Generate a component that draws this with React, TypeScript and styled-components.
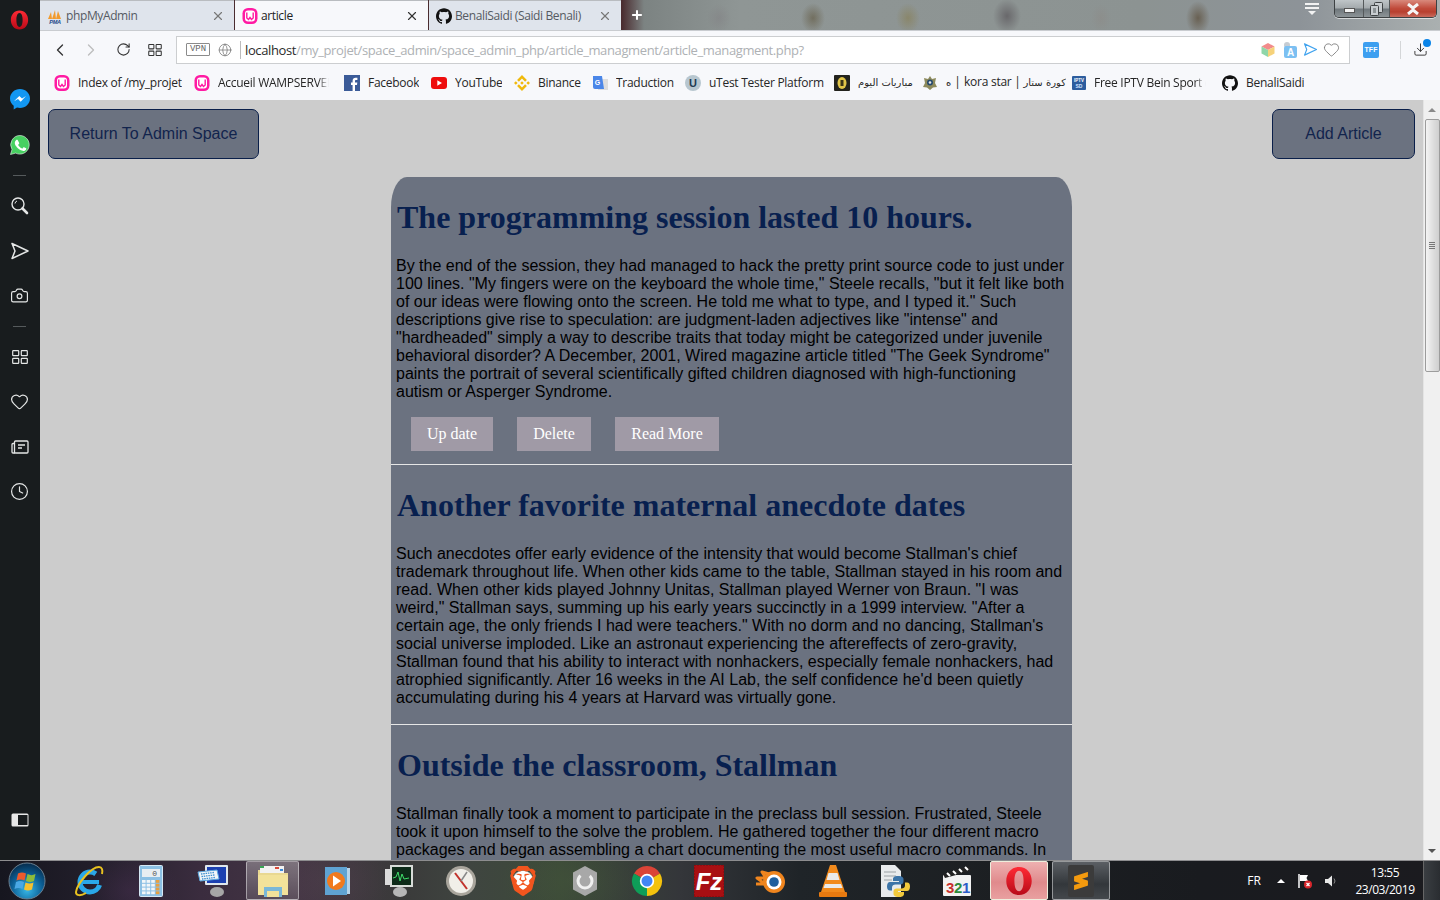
import React from "react";
import styled, { createGlobalStyle } from "styled-components";
import { Camera, Heart, Clock, ChevronLeft, ChevronRight, RotateCw, Globe, X, Plus, Download } from "lucide-react";
import { SiBinance, SiGithub, SiSublimetext, SiBrave } from "react-icons/si";

const Global = createGlobalStyle`
  html, body { margin: 0; padding: 0; width: 1440px; height: 900px; overflow: hidden; background: #000; }
  * { box-sizing: border-box; }
`;

const Screen = styled.div`
  width: 1440px; height: 900px; display: grid;
  grid-template-columns: 40px 1fr; grid-template-rows: 860px 40px;
  font-family: "Open Sans", "Noto Sans", "DejaVu Sans", sans-serif;
`;

/* ---------- Opera side bar ---------- */
const Sidebar = styled.aside`
  background: #181c1e; display: flex; flex-direction: column; align-items: center; color: #e4e6e6; padding-right: 1px;
`;
const SideSlot = styled.div<{ $h?: number }>`
  height: ${(p) => p.$h ?? 45}px; width: 100%; flex: none;
  display: flex; align-items: center; justify-content: center;
`;
const SideSep = styled.div`
  width: 13px; height: 1px; background: #555a5c; margin: 8px 0 7px;
`;
const SideBottom = styled.div`
  margin-top: auto; padding-bottom: 18px; width: 100%;
`;

/* ---------- Browser ---------- */
const Browser = styled.main`
  display: flex; flex-direction: column; min-width: 0; height: 860px; overflow: hidden;
`;
const TabStrip = styled.div`
  height: 31px; flex: none; display: flex; align-items: stretch; position: relative;
  background:
    radial-gradient(ellipse 12px 14px at 679px 18px, rgba(125,120,125,.35), transparent),
    radial-gradient(ellipse 12px 15px at 773px 18px, rgba(95,85,60,.6), transparent),
    radial-gradient(ellipse 12px 15px at 868px 18px, rgba(135,125,80,.6), transparent),
    radial-gradient(ellipse 14px 17px at 967px 16px, rgba(85,80,85,.65), transparent),
    radial-gradient(ellipse 10px 14px at 1061px 18px, rgba(140,130,125,.3), transparent),
    radial-gradient(ellipse 12px 17px at 1158px 18px, rgba(90,75,55,.7), transparent),
    linear-gradient(90deg, #4a2c30 582px, #7c8382 604px, #8f9695 700px, #8c9392 1100px, #8d9398 1260px, #aab0b0 100%);
  border-bottom: 1px solid #c9ccd0;
`;
const Tab = styled.div<{ $active?: boolean; $w: number }>`
  width: ${(p) => p.$w}px; flex: none; display: flex; align-items: center; gap: 3px;
  padding: 0 9px 0 7px; margin-right: 1px; font-size: 12px; letter-spacing: -.38px;
  background: ${(p) => (p.$active ? "#f7f8fb" : "#dfe4ec")};
  color: ${(p) => (p.$active ? "#222" : "#555a62")};
  border-top: 1px solid #b9bcc0;
`;
const TabTitle = styled.span`
  flex: 1; white-space: nowrap; overflow: hidden;
`;
const NewTab = styled.div`
  width: 29px; display: flex; align-items: center; justify-content: center; color: #fff;
`;
const StripMenu = styled.div`
  margin-left: auto; width: 30px; display: flex; flex-direction: column; gap: 2px; align-items: center; padding-top: 3px; margin-right: 7px;
`;
const StripBar = styled.i`
  width: 14px; height: 2px; background: #f2f2f2; display: block;
`;
const WinControls = styled.div`
  width: 103px; height: 18px; display: flex; border: 1px solid #3d4143; border-top: none; border-radius: 0 0 5px 5px; overflow: hidden; margin-right: 3px;
  box-shadow: 0 1px 0 rgba(255,255,255,.6);
`;
const WinBtn = styled.div<{ $w: number; $red?: boolean }>`
  width: ${(p) => p.$w}px; flex: none; display: flex; align-items: center; justify-content: center; color: #fff;
  background: ${(p) => (p.$red ? "linear-gradient(#d9897c, #c04a3a 50%, #b8402f 70%, #c96a5c)" : "linear-gradient(#bfc5c8, #a5abae 45%, #70787d 55%, #8d9497)")};
  border-right: 1px solid #55595b;
  &:last-child { border-right: none; }
`;
const MinGlyph = styled.i`
  display: block; width: 11px; height: 5px; background: #f2f2f2; border: 1px solid #555; margin-top: 3px;
`;
const Toolbar = styled.div`
  height: 35px; flex: none; display: flex; align-items: center; background: #f7f8fb; padding: 2px 0 0 9px;
`;
const NavBtn = styled.div<{ $w?: number; $c?: string }>`
  width: ${(p) => p.$w ?? 32}px; flex: none; display: flex; align-items: center; justify-content: center; color: ${(p) => p.$c ?? "#333"};
`;
const Address = styled.div`
  margin-left: 1px; width: 1174px; height: 28px; flex: none; background: #fff; border: 1px solid #ccced0;
  display: flex; align-items: center; padding: 0 9px 0 9px; font-size: 13px; letter-spacing: -.38px;
`;
const VpnBadge = styled.span`
  width: 24px; height: 13px; border: 1px solid #8b8b8b; font: 9px/11px "Liberation Mono", monospace; letter-spacing: 0; color: #666; text-align: center; border-radius: 1px; flex: none;
`;
const AddrDivider = styled.i`
  width: 1px; height: 18px; background: #bcbcbc; margin: 0 4px 0 0; display: block; flex: none;
`;
const Url = styled.div`
  flex: 1; color: #aeb1b4; white-space: nowrap; overflow: hidden; padding-top: 1px;
`;
const Host = styled.span`
  color: #2a2a2a;
`;
const AddrIcons = styled.div`
  display: flex; align-items: center; gap: 5px;
`;
const TffBadge = styled.div`
  width: 16px; height: 16px; border-radius: 2px; background: #3d9ff0; color: #fff; font: 700 7px/16px "Liberation Sans", sans-serif; text-align: center;
`;
const ToolRight = styled.div`
  flex: 1; display: flex; align-items: center; padding-left: 13px; position: relative;
`;
const ToolSep = styled.i`
  width: 1px; height: 18px; background: #d4d6d8; margin-left: 21px; display: block;
`;
const BlueDot = styled.i`
  position: absolute; right: 9px; top: -2px; width: 8px; height: 8px; border-radius: 50%; background: #0a84e8; display: block;
`;
const Bookmarks = styled.div`
  height: 34px; flex: none; display: flex; align-items: center; background: #f7f8fb; padding: 0 0 1px 14px; font-size: 12px; color: #262626;
`;
const Bookmark = styled.div<{ $w: number }>`
  width: ${(p) => p.$w}px; flex: none; display: flex; align-items: center; gap: 8px; white-space: nowrap;
  & > svg { flex: none; }
`;
const MarkLabel = styled.span<{ $max: number; $fade?: boolean }>`
  display: block; max-width: ${(p) => p.$max}px; overflow: hidden; letter-spacing: -.27px; line-height: 18px;
  ${(p) => p.$fade && "-webkit-mask-image: linear-gradient(90deg, #000 90%, transparent); mask-image: linear-gradient(90deg, #000 90%, transparent);"}
`;
const ArabicRun = styled.span`
  font-family: "DejaVu Sans", sans-serif; font-size: 10px; letter-spacing: 0;
`;

/* ---------- Page ---------- */
const PageArea = styled.div`
  flex: 1; min-height: 0; display: flex; background: #cccccc;
`;
const Page = styled.div`
  flex: 1; min-width: 0; overflow: hidden; font-family: "Liberation Sans", Arial, sans-serif;
`;
const TopRow = styled.div`
  display: flex; justify-content: space-between; padding: 9px 8px 18px;
`;
const AdminButton = styled.a<{ $w: number }>`
  height: 50px; width: ${(p) => p.$w}px; display: flex; align-items: center; justify-content: center; font-size: 16px;
  color: #12244d; background: #6b7280; border: 1px solid #0a1f4a; border-radius: 7px;
`;
const ArticleList = styled.section`
  width: 681px; margin: 0 auto; background: #6b7280;
  border-radius: 16px 16px 0 0 / 30px 30px 0 0;
`;
const Article = styled.article<{ $pb: number; $rule?: boolean }>`
  padding: 0 5px ${(p) => p.$pb}px; border-bottom: ${(p) => (p.$rule ? "1px solid #e6e6e6" : "none")};
`;
const Heading = styled.h2`
  margin: 0; padding: 24px 0 23px; font: 700 32px/33px "Liberation Serif", "Times New Roman", serif;
  color: #08204f; white-space: nowrap; transform: translateX(1px);
`;
const Body = styled.p`
  margin: 0; font-size: 16px; line-height: 18px; color: #000;
`;
const ActionRow = styled.div`
  display: flex; gap: 24px; margin: 16px 0 0 15px;
`;
const ActionButton = styled.a<{ $w: number }>`
  height: 34px; width: ${(p) => p.$w}px; display: flex; align-items: center; justify-content: center; background: #a09aa6; color: #fff;
  font: 16px "Liberation Serif", "Times New Roman", serif;
`;
const Scrollbar = styled.div`
  width: 17px; flex: none; background: #f0f0f0; display: flex; flex-direction: column; align-items: center; border-left: 1px solid #e4e4e4;
`;
const ScrollCap = styled.div`
  height: 19px; flex: none; display: flex; align-items: center; justify-content: center; width: 100%;
`;
const ScrollArrow = styled.i<{ $down?: boolean; $c?: string }>`
  display: block; width: 0; height: 0; border-left: 4px solid transparent; border-right: 4px solid transparent;
  ${(p) => (p.$down ? `border-top: 4px solid ${p.$c ?? "#555"};` : `border-bottom: 4px solid ${p.$c ?? "#8a8a8a"};`)}
`;
const ScrollThumb = styled.div`
  width: 15px; height: 253px; flex: none; border: 1px solid #9c9c9c; border-radius: 2px;
  background: linear-gradient(90deg, #f4f4f4, #dcdcdc 60%, #cfcfcf);
  display: flex; flex-direction: column; gap: 1px; align-items: center; justify-content: center;
`;
const ThumbGrip = styled.i`
  width: 6px; height: 1px; background: #777; display: block;
`;
const ScrollTrack = styled.div`
  flex: 1;
`;

/* ---------- Task bar ---------- */
const Taskbar = styled.footer`
  grid-column: 1 / 3; height: 40px; display: flex; align-items: center; color: #fff;
  border-top: 1px solid #8d8d8f;
  background:
    radial-gradient(ellipse 50px 40px at 130px 30px, rgba(80,50,90,.35), transparent),
    radial-gradient(ellipse 60px 40px at 330px 20px, rgba(90,70,85,.3), transparent),
    radial-gradient(ellipse 70px 40px at 570px 20px, rgba(70,90,60,.35), transparent),
    linear-gradient(90deg, #16161f 0, #231f2b 100px, #3a2c3e 200px, #443644 300px, #3a3a3a 400px, #3f4540 470px, #3c4a38 560px, #34363a 680px, #1f2428 800px, #1c1f22 1000px, #191b1f 1200px, #1b1b1f 100%);
`;
const StartSlot = styled.div`
  width: 58px; flex: none; display: flex; justify-content: center; padding-right: 4px;
`;
const TaskSlot = styled.div<{ $state?: "open" | "hot" | "dark" }>`
  width: 62px; height: 39px; flex: none; display: flex; align-items: center; justify-content: center; padding-top: 1px;
  ${(p) => p.$state === "open" && "background: linear-gradient(rgba(255,255,255,.3), rgba(255,255,255,.12)); border: 1px solid rgba(255,255,255,.45); border-radius: 2px; margin: 0 7px 0 2px; width: 53px;"}
  ${(p) => p.$state === "hot" && "background: linear-gradient(#eeb0b0, #e08a8c 55%, #e9a0a0); border: 1px solid #eed; border-radius: 2px; margin: 0 2px; width: 58px;"}
  ${(p) => p.$state === "dark" && "background: linear-gradient(#5b5f64, #33373b 60%, #44484c); border: 1px solid rgba(255,255,255,.45); border-radius: 2px; margin: 0 2px; width: 58px;"}
`;
const SublimeTile = styled.div`
  width: 26px; height: 32px; border-radius: 2px; background: #3b3b3b; display: flex; align-items: center; justify-content: center;
`;
const BraveBack = styled.div`
  display: flex; border-radius: 50%; background: radial-gradient(circle, #fff 45%, transparent 52%);
`;
const Tray = styled.div`
  margin-left: auto; display: flex; align-items: center; height: 100%; font-size: 12px;
`;
const TrayItem = styled.div<{ $w: number }>`
  width: ${(p) => p.$w}px; display: flex; justify-content: center; align-items: center;
`;
const ClockBox = styled.div`
  width: 76px; text-align: center; font-size: 12px; line-height: 17px; letter-spacing: -.45px; padding-top: 1px;
`;
const ShowDesktop = styled.div`
  width: 17px; height: 100%; background: linear-gradient(90deg, #3a3e42, #2a2d31); border-left: 1px solid #666;
`;

/* ---------- Drawings ---------- */
const WampIcon = ({ s = 16 }: { s?: number }) => (
  <svg width={s} height={s} viewBox="0 0 16 16">
    <rect x=".5" y="0" width="15" height="16" rx="5.500" fill="#ff1aa3" />
    <rect x="3" y="2.500" width="10" height="11" rx="3" fill="#fff" />
    <path d="M4.800 4.500v5.500l1.700 1.500L8 9.500l1.500 2 1.700-1.500V4.500" fill="none" stroke="#ff1aa3" strokeWidth="1.400" />
  </svg>
);
const PmaIcon = () => (
  <svg width="16" height="16" viewBox="0 0 16 16">
    <path d="M1 11 4 4l1 7zM5 11l3-9 1 9zM9 11l2-8 3 8z" fill="#f29b2e" />
    <text x="8" y="15.500" textAnchor="middle" fontFamily="Liberation Sans" fontWeight="700" fontStyle="italic" fontSize="5.600" fill="#234b8a">PMA</text>
  </svg>
);
const OperaIcon = ({ w = 22, h = 24, id }: { w?: number; h?: number; id: string }) => (
  <svg width={w} height={h} viewBox="0 0 22 24">
    <defs>
      <linearGradient id={id} x1="0" y1="0" x2="0" y2="1"><stop offset="0" stopColor="#ff2a35" /><stop offset="1" stopColor="#b80a18" /></linearGradient>
    </defs>
    <path fillRule="evenodd" fill={`url(#${id})`} d="M11 1C5 1 1 5.800 1 12s4 11 10 11 10-4.800 10-11S17 1 11 1zm0 3c2.600 0 3.600 3.800 3.600 8s-1 8-3.600 8-3.600-3.800-3.600-8S8.400 4 11 4z" />
  </svg>
);
const MessengerIcon = () => (
  <svg width="20" height="21" viewBox="0 0 20 21">
    <path d="M10 0C4.500 0 0 4.200 0 9.500c0 3 1.400 5.500 3.700 7.200V20.500l3.300-1.900c1 .3 2 .4 3 .4 5.500 0 10-4.200 10-9.500S15.500 0 10 0z" fill="#1297f2" />
    <path d="M4 12.300 9.300 7l2.700 2.600L16 7l-5.300 5.700-2.700-2.600z" fill="#fff" />
  </svg>
);
const WhatsappIcon = () => (
  <svg width="20" height="20" viewBox="0 0 20 20">
    <path d="M10 .5A9.300 9.300 0 0 0 2 14.500L.5 19.500l5.200-1.400A9.300 9.300 0 1 0 10 .5z" fill="#47d061" stroke="#e9f7ec" strokeWidth=".6" />
    <path d="M7 4.800c-.3 0-.8.1-1.200.6-.5.600-1 1.300-1 2.600s1 2.800 1.200 3c.2.200 2 3.100 4.900 4.200 2.300.9 2.800.7 3.400.7.500-.1 1.500-.7 1.800-1.300.2-.6.200-1.200.1-1.300l-2.200-1.100c-.2-.1-.4-.1-.6.100l-.8 1.100c-.1.200-.3.200-.6.100-.3-.1-1.200-.4-2.200-1.400-.8-.7-1.400-1.600-1.500-1.900-.2-.3 0-.4.100-.6l.8-1c.1-.2.100-.3 0-.5L7.800 5.200c-.2-.4-.5-.4-.8-.4z" fill="#fff" />
  </svg>
);
const SearchIcon = () => (
  <svg width="18" height="18" viewBox="0 0 18 18" fill="none" stroke="currentColor">
    <circle cx="7" cy="7" r="6" strokeWidth="1.400" />
    <path d="M4 6.500A3 3 0 0 1 6 4" strokeWidth="1" />
    <path d="M11.500 11.500 16 16" strokeWidth="2.600" strokeLinecap="round" />
  </svg>
);
const GridIcon = ({ w = 16, h = 14 }: { w?: number; h?: number }) => (
  <svg width={w} height={h} viewBox="0 0 16 14" fill="none" stroke="currentColor" strokeWidth="1.200">
    <rect x=".7" y=".7" width="6" height="5" rx=".6" />
    <rect x="9.300" y=".7" width="6" height="5" rx=".6" />
    <rect x=".7" y="8.300" width="6" height="5" rx=".6" />
    <rect x="9.300" y="8.300" width="6" height="5" rx=".6" />
  </svg>
);
const SendOutline = ({ s = 20, c = "currentColor", w = 1.500 }: { s?: number; c?: string; w?: number }) => (
  <svg width={s} height={s} viewBox="0 0 20 20"><path d="M2 2.500 18 10 2 17.500 5 10z" fill="none" stroke={c} strokeWidth={w} strokeLinejoin="round" /></svg>
);
const NewsIcon = () => (
  <svg width="18" height="14" viewBox="0 0 18 14" fill="none" stroke="currentColor" strokeWidth="1.300">
    <rect x="3.500" y="1" width="13.500" height="12" rx="1" />
    <path d="M3.500 3.500H2a1 1 0 0 0-1 1V12a1 1 0 0 0 1 1h2M7 5h7M7 8h4" />
  </svg>
);
const PanelIcon = () => (
  <svg width="18" height="14" viewBox="0 0 18 14">
    <rect x=".5" y=".5" width="17" height="13" rx="1.500" fill="#e8e8e8" />
    <rect x="7" y="2" width="9.500" height="10" fill="#181c1e" />
  </svg>
);
const RestoreGlyph = () => (
  <svg width="13" height="14" viewBox="0 0 13 14" fill="#c8cdd0" stroke="#3f4345">
    <rect x="4.500" y=".5" width="8" height="10" rx="1" />
    <rect x=".5" y="3.500" width="8" height="10" rx="1" />
    <rect x="3" y="6" width="3" height="5" fill="#8d9497" stroke="none" />
  </svg>
);
const CloseGlyph = () => (
  <svg width="14" height="12" viewBox="0 0 14 12"><path d="M2 1l5 4 5-4M2 11l5-4 5 4" fill="none" stroke="#f5f5f5" strokeWidth="3" /></svg>
);
const FacebookIcon = () => (
  <svg width="16" height="16" viewBox="0 0 16 16"><rect width="16" height="16" fill="#3b5b98" /><path d="M11 16v-6h2l.3-2.400H11V6.100c0-.7.200-1.200 1.200-1.200h1.200V2.800c-.2 0-.9-.1-1.800-.1-1.800 0-3 1.100-3 3.100v1.800H7V10h1.600v6z" fill="#fff" /></svg>
);
const YoutubeIcon = () => (
  <svg width="16" height="12" viewBox="0 0 16 12"><rect width="16" height="12" rx="3" fill="#ee0d0d" /><path d="M6.300 3.200v5.600L11 6z" fill="#fff" /></svg>
);
const TranslateIcon = () => (
  <svg width="16" height="16" viewBox="0 0 16 16">
    <rect x="6" y="4" width="10" height="11" fill="#ddd" />
    <path d="M1 1h9l2 13H3a2 2 0 0 1-2-2z" fill="#4a86e8" />
    <text x="5.500" y="9.500" textAnchor="middle" fontFamily="Liberation Sans" fontWeight="700" fontSize="7" fill="#fff">G</text>
  </svg>
);
const UtestIcon = () => (
  <svg width="16" height="16" viewBox="0 0 16 16"><circle cx="8" cy="8" r="8" fill="#b7c6cf" /><text x="8" y="12" textAnchor="middle" fontFamily="Liberation Sans" fontWeight="700" fontSize="11" fill="#1f3b52">U</text></svg>
);
const MatchIcon = () => (
  <svg width="16" height="16" viewBox="0 0 16 16"><rect width="16" height="16" rx="1" fill="#23231d" /><ellipse cx="8" cy="8" rx="4.500" ry="6" fill="#e1c548" /><rect x="6.500" y="5" width="3" height="6" fill="#3b3517" /></svg>
);
const KoraIcon = () => (
  <svg width="16" height="16" viewBox="0 0 16 16"><path d="M8 1l2 3 4-1-1 5 2 4-4 .5L8 15l-3-2.500L1 12l2-4-1-5 4 1z" fill="#8d8a5c" /><circle cx="8" cy="7.500" r="3" fill="#264a6e" /><circle cx="8" cy="7.500" r="1.300" fill="#e8e8e8" /></svg>
);
const IptvIcon = () => (
  <svg width="14" height="14" viewBox="0 0 14 14"><rect width="14" height="14" rx="1" fill="#2d5d9e" /><text x="7" y="6" textAnchor="middle" fontFamily="Liberation Sans" fontWeight="700" fontSize="4.500" fill="#fff">IPTV</text><text x="7" y="12" textAnchor="middle" fontFamily="Liberation Sans" fontWeight="700" fontSize="5" fill="#cfe2ff">SD</text></svg>
);
const CubeIcon = () => (
  <svg width="16" height="16" viewBox="0 0 16 16"><path d="M8 1l6.500 3.500L8 8 1.500 4.500z" fill="#f28b8b" /><path d="M1.500 4.500 8 8v7l-6.500-3.500z" fill="#8fd6a8" /><path d="M14.500 4.500 8 8v7l6.500-3.500z" fill="#f6d27a" /></svg>
);
const LangIcon = () => (
  <svg width="17" height="18" viewBox="0 0 17 18"><circle cx="6" cy="4" r="3" fill="#c6ccd2" /><rect x="3" y="5" width="13" height="12" rx="2" fill="#7cc0f2" /><text x="9.500" y="15" textAnchor="middle" fontFamily="Liberation Sans" fontWeight="700" fontSize="10" fill="#fff">A</text></svg>
);

const WindowsOrb = () => (
  <svg width="38" height="38" viewBox="0 0 38 38">
    <defs>
      <radialGradient id="orb" cx=".5" cy=".75" r=".8"><stop offset="0" stopColor="#37b7e8" /><stop offset=".55" stopColor="#0b5d93" /><stop offset="1" stopColor="#06233f" /></radialGradient>
    </defs>
    <circle cx="19" cy="19" r="18" fill="url(#orb)" stroke="#6a7f90" />
    <path d="M10 11.500c3-1.500 5-1.500 8 0l-1.500 7c-3-1.300-5-1.300-8 0z" fill="#ec5a2d" />
    <path d="M19.500 12c3 1.500 5 1.500 8 0l-1.500 7c-3 1.300-5 1.300-8 0z" fill="#8dbb3a" />
    <path d="M8 20c3-1.300 5-1.300 8 0l-1.500 7c-3-1.400-5-1.400-8 0z" fill="#4aa8e5" />
    <path d="M17.500 20.500c3 1.300 5 1.300 8 0L24 27.500c-3 1.400-5 1.400-8 0z" fill="#f7c12e" />
  </svg>
);
const IeIcon = () => (
  <svg width="32" height="34" viewBox="0 0 32 34">
    <circle cx="17" cy="18" r="10" fill="none" stroke="#2aa8e8" strokeWidth="5" strokeDasharray="50 13" strokeDashoffset="-3" />
    <rect x="9" y="16" width="17" height="4" fill="#2aa8e8" />
    <path d="M26 3C18 3 4 20 3 28c-.3 4 5 4 10 1" fill="none" stroke="#e9c21f" strokeWidth="2" />
    <path d="M26 3c3 0 4 3 3 7" fill="none" stroke="#e9c21f" strokeWidth="2" />
  </svg>
);
const CalcIcon = () => (
  <svg width="24" height="32" viewBox="0 0 24 32">
    <rect x=".5" y=".5" width="23" height="31" rx="1" fill="#8cc0e4" stroke="#d6e8f4" />
    <rect x="3" y="4" width="18" height="8" fill="#e8eef2" />
    <text x="18" y="11" textAnchor="end" fontFamily="Liberation Mono" fontSize="8" fill="#555">0</text>
    {[0, 1, 2, 3].map((r) => [0, 1, 2, 3].map((c) => <rect key={`${r}${c}`} x={3 + c * 4.600} y={15 + r * 3.800} width="3.600" height="2.800" fill={c === 3 ? "#e8a040" : "#f2f6f8"} />))}
  </svg>
);
const KeyboardIcon = () => (
  <svg width="32" height="34" viewBox="0 0 32 34">
    <rect x="8" y="1" width="23" height="20" rx="1" fill="#dfe6ec" />
    <rect x="10" y="3" width="19" height="16" fill="#1b3fb0" />
    <ellipse cx="20" cy="28" rx="7" ry="5" fill="#a6a6a6" />
    <path d="M1 8l19 -2 2 9-19 2z" fill="#f2f6f8" stroke="#5ca8df" />
    <path d="M4 10l13-1.500M4.500 12.500l13-1.500M5 15l13-1.500" stroke="#3b8ed0" strokeWidth="1.300" strokeDasharray="1.500 .8" />
  </svg>
);
const FolderIcon = () => (
  <svg width="32" height="32" viewBox="0 0 32 32">
    <path d="M1 5h12l2 3h16v22H1z" fill="#e9d892" />
    <rect x="3" y="1" width="24" height="7" fill="#f2f2f2" /><rect x="3" y="1" width="4" height="2" fill="#3aa655" /><rect x="18" y="2" width="4" height="2" fill="#d84a3a" /><rect x="23" y="4" width="3" height="2" fill="#3a8ad8" />
    <path d="M1 10h30v20H1z" fill="#f2e29a" />
    <rect x="7" y="22" width="18" height="10" fill="#7ab8d8" /><rect x="10" y="26" width="12" height="6" fill="#f2e29a" />
  </svg>
);
const MediaIcon = () => (
  <svg width="26" height="30" viewBox="0 0 26 30">
    <rect x="4" y="2" width="22" height="26" fill="#b6d4ea" /><rect x="1" y="1" width="22" height="28" fill="#5fa3d3" />
    <circle cx="12" cy="15" r="9" fill="#f07a1e" /><path d="M9 9.500v11l8-5.500z" fill="#fff" />
  </svg>
);
const MonitorIcon = () => (
  <svg width="30" height="34" viewBox="0 0 30 34">
    <ellipse cx="16" cy="28" rx="7" ry="5" fill="#b6b6b6" /><rect x="1" y="5" width="8" height="16" fill="#dcdcdc" />
    <rect x="6" y="1" width="23" height="22" fill="#d8dcd8" /><rect x="8" y="3" width="19" height="18" fill="#0d2b18" />
    <path d="M9 14l3-1 2-5 2 9 2-7 2 5 5-1" stroke="#3fdc6a" fill="none" />
  </svg>
);
const NavigatorIcon = () => (
  <svg width="32" height="32" viewBox="0 0 32 32">
    <circle cx="16" cy="16" r="15" fill="#a9a59c" /><circle cx="16" cy="16" r="12" fill="#f1efe9" />
    <path d="M10 8l6 8 6 8" stroke="#c2322c" strokeWidth="2" fill="none" /><path d="M22 7l-6 9" stroke="#888" strokeWidth="1.500" />
  </svg>
);
const CertIcon = () => (
  <svg width="26" height="32" viewBox="0 0 26 32">
    <path d="M13 1l12 6.500v17L13 31 1 24.500v-17z" fill="#a8a8a8" /><circle cx="13" cy="16" r="7" fill="none" stroke="#f0f0f0" strokeWidth="3" strokeDasharray="28 10" />
  </svg>
);
const ChromeIcon = () => (
  <svg width="32" height="32" viewBox="0 0 32 32">
    <path d="M16 16 3 8.500A15 15 0 0 1 29 8.500z" fill="#db4437" />
    <path d="M16 16 29 8.500A15 15 0 0 1 16 31z" fill="#f4c20d" />
    <path d="M16 16 16 31A15 15 0 0 1 3 8.500z" fill="#0f9d58" />
    <circle cx="16" cy="16" r="7.200" fill="#fff" /><circle cx="16" cy="16" r="5.500" fill="#4285f4" />
  </svg>
);
const ZillaIcon = () => (
  <svg width="30" height="32" viewBox="0 0 30 32">
    <rect width="30" height="32" fill="#a80f12" stroke="#7a0a0c" strokeDasharray="2 1" />
    <text x="15" y="25" textAnchor="middle" fontFamily="Liberation Sans" fontWeight="700" fontStyle="italic" fontSize="24" fill="#fff">Fz</text>
  </svg>
);
const BlenderIcon = () => (
  <svg width="32" height="30" viewBox="0 0 32 30">
    <path d="M1 18h9L2 12h9L7 6l11 3" fill="none" stroke="#f0851e" strokeWidth="3" strokeLinejoin="round" />
    <circle cx="19" cy="16" r="11" fill="#f0851e" /><circle cx="19" cy="16" r="7.500" fill="#fff" /><circle cx="19" cy="16" r="4.800" fill="#1f5f9e" />
  </svg>
);
const VlcIcon = () => (
  <svg width="28" height="34" viewBox="0 0 28 34">
    <path d="M11 1h6l9 27H2z" fill="#f28a1c" /><path d="M9.500 9h9l2 7h-13zM6 20h16l1.500 4h-19z" fill="#eaeaea" /><rect x="0" y="28" width="28" height="5" rx="1" fill="#e87a10" />
  </svg>
);
const PyDocIcon = () => (
  <svg width="30" height="34" viewBox="0 0 30 34">
    <path d="M1 1h14l6 6v26H1z" fill="#e8eaec" /><path d="M4 8h12M4 12h12M4 16h8" stroke="#9aa0a4" />
    <path d="M18 12c-4 0-5 1.500-5 3v2h6v1h-9c-2 0-3 2-3 4.500s1 4 3 4h2v-3c0-2 1.500-3 3.500-3h5c1.500 0 3-1 3-3v-2.500c0-1.500-1.500-3-5.500-3z" fill="#3c74a8" />
    <path d="M19 33c4 0 5-1.500 5-3v-2h-6v-1h9c2 0 3-2 3-4.500s-1-4-3-4h-2v3c0 2-1.500 3-3.500 3h-5c-1.500 0-3 1-3 3v2.500c0 1.500 1.500 3 5.500 3z" fill="#f2c93c" />
  </svg>
);
const ClapIcon = () => (
  <svg width="30" height="32" viewBox="0 0 30 32">
    <rect x="1" y="10" width="28" height="21" rx="1" fill="#f2f2f2" />
    <path d="M1 9 27 1l2 5L3 13z" fill="#222" /><path d="M5 8l3 3M11 6l3 3M17 4l3 3M23 2l3 3" stroke="#fff" strokeWidth="2" />
    <text x="4" y="28" fontFamily="Liberation Sans" fontWeight="700" fontSize="15" fill="#c8302c">3</text>
    <text x="12" y="28" fontFamily="Liberation Sans" fontWeight="700" fontSize="15" fill="#2c8a3c">2</text>
    <text x="20" y="28" fontFamily="Liberation Sans" fontWeight="700" fontSize="15" fill="#2c5cc8">1</text>
  </svg>
);
const FlagIcon = () => (
  <svg width="16" height="16" viewBox="0 0 16 16">
    <path d="M2 1v14" stroke="#fff" strokeWidth="1.500" /><path d="M3 2h8l-1.500 3L11 8H3z" fill="#fff" />
    <circle cx="11" cy="11.500" r="4" fill="#d8262c" /><path d="M9.500 10l3 3M12.500 10l-3 3" stroke="#fff" strokeWidth="1.200" />
  </svg>
);
const SpeakerIcon = () => (
  <svg width="14" height="14" viewBox="0 0 14 14"><path d="M1 5h3l4-3.500v11L4 9H1z" fill="#e8e8e8" /><path d="M10 4.500a4 4 0 0 1 0 5" stroke="#888" fill="none" /></svg>
);

const marks: { w: number; max: number; icon: React.ReactNode; label: React.ReactNode; key: string; fade?: boolean }[] = [
  { key: "a", w: 140, max: 110, icon: <WampIcon />, label: "Index of /my_projet" },
  { key: "b", w: 150, max: 111, icon: <WampIcon />, label: "Accueil WAMPSERVER", fade: true },
  { key: "c", w: 87, max: 60, icon: <FacebookIcon />, label: "Facebook" },
  { key: "d", w: 83, max: 60, icon: <YoutubeIcon />, label: "YouTube" },
  { key: "e", w: 78, max: 60, icon: <SiBinance size={16} color="#f0b90b" />, label: "Binance" },
  { key: "f", w: 93, max: 70, icon: <TranslateIcon />, label: "Traduction" },
  { key: "g", w: 149, max: 125, icon: <UtestIcon />, label: "uTest Tester Platform" },
  { key: "h", w: 88, max: 64, icon: <MatchIcon />, label: <ArabicRun>مباريات اليوم</ArabicRun> },
  { key: "i", w: 150, max: 126, icon: <KoraIcon />, label: <><ArabicRun>ه</ArabicRun> | kora star | <ArabicRun>كورة ستار</ArabicRun></> },
  { key: "j", w: 150, max: 112, icon: <IptvIcon />, label: "Free IPTV Bein Sport (", fade: true },
  { key: "k", w: 90, max: 70, icon: <SiGithub size={16} color="#111" />, label: "BenaliSaidi" },
];

export default function App() {
  return (
    <Screen>
      <Global />
      <Sidebar>
        <SideSlot $h={40}><OperaIcon id="opSide" w={19} h={22} /></SideSlot>
        <SideSlot $h={37} />
        <SideSlot><MessengerIcon /></SideSlot>
        <SideSlot><WhatsappIcon /></SideSlot>
        <SideSep />
        <SideSlot><SearchIcon /></SideSlot>
        <SideSlot><SendOutline /></SideSlot>
        <SideSlot><Camera size={19} strokeWidth={1.500} /></SideSlot>
        <SideSep />
        <SideSlot><GridIcon /></SideSlot>
        <SideSlot><Heart size={19} strokeWidth={1.500} /></SideSlot>
        <SideSlot><NewsIcon /></SideSlot>
        <SideSlot><Clock size={19} strokeWidth={1.500} /></SideSlot>
        <SideBottom><SideSlot><PanelIcon /></SideSlot></SideBottom>
      </Sidebar>

      <Browser>
        <TabStrip>
          <Tab $w={194}><PmaIcon /><TabTitle>phpMyAdmin</TabTitle><X size={14} color="#777" /></Tab>
          <Tab $w={193} $active><WampIcon /><TabTitle>article</TabTitle><X size={14} color="#333" /></Tab>
          <Tab $w={192}><SiGithub size={16} color="#111" /><TabTitle>BenaliSaidi (Saidi Benali)</TabTitle><X size={14} color="#777" /></Tab>
          <NewTab><Plus size={14} strokeWidth={3.500} /></NewTab>
          <StripMenu><StripBar /><StripBar /><ScrollArrow $down $c="#f2f2f2" /></StripMenu>
          <WinControls>
            <WinBtn $w={29}><MinGlyph /></WinBtn>
            <WinBtn $w={26}><RestoreGlyph /></WinBtn>
            <WinBtn $w={46} $red><CloseGlyph /></WinBtn>
          </WinControls>
        </TabStrip>
        <Toolbar>
          <NavBtn $w={22}><ChevronLeft size={20} strokeWidth={1.600} /></NavBtn>
          <NavBtn $w={40} $c="#bdbdbd"><ChevronRight size={20} strokeWidth={1.600} /></NavBtn>
          <NavBtn $w={24}><RotateCw size={15} strokeWidth={1.700} /></NavBtn>
          <NavBtn $w={40}><GridIcon w={14} h={12} /></NavBtn>
          <Address>
            <VpnBadge>VPN</VpnBadge>
            <NavBtn $w={30} $c="#777"><Globe size={14} strokeWidth={1.300} /></NavBtn>
            <AddrDivider />
            <Url><Host>localhost</Host>/my_projet/space_admin/space_admin_php/article_managment/article_managment.php?</Url>
            <AddrIcons>
              <CubeIcon />
              <LangIcon />
              <SendOutline s={15} c="#3fa2ee" w={1.500} />
              <Heart size={17} strokeWidth={1.200} color="#777" />
            </AddrIcons>
          </Address>
          <ToolRight>
            <TffBadge>TFF</TffBadge>
            <ToolSep />
            <NavBtn $w={38}><Download size={15} strokeWidth={1.500} /></NavBtn>
            <BlueDot />
          </ToolRight>
        </Toolbar>
        <Bookmarks>
          {marks.map((m) => (
            <Bookmark key={m.key} $w={m.w}>{m.icon}<MarkLabel $max={m.max} $fade={m.fade}>{m.label}</MarkLabel></Bookmark>
          ))}
        </Bookmarks>
        <PageArea>
          <Page>
            <TopRow>
              <AdminButton $w={211}>Return To Admin Space</AdminButton>
              <AdminButton $w={143}>Add Article</AdminButton>
            </TopRow>
            <ArticleList>
              <Article $pb={13} $rule>
                <Heading>The programming session lasted 10 hours.</Heading>
                <Body>By the end of the session, they had managed to hack the pretty print source code to just under 100 lines. "My fingers were on the keyboard the whole time," Steele recalls, "but it felt like both of our ideas were flowing onto the screen. He told me what to type, and I typed it." Such descriptions give rise to speculation: are judgment-laden adjectives like "intense" and "hardheaded" simply a way to describe traits that today might be categorized under juvenile behavioral disorder? A December, 2001, Wired magazine article titled "The Geek Syndrome" paints the portrait of several scientifically gifted children diagnosed with high-functioning autism or Asperger Syndrome.</Body>
                <ActionRow>
                  <ActionButton $w={82}>Up date</ActionButton>
                  <ActionButton $w={74}>Delete</ActionButton>
                  <ActionButton $w={104}>Read More</ActionButton>
                </ActionRow>
              </Article>
              <Article $pb={17} $rule>
                <Heading>Another favorite maternal anecdote dates</Heading>
                <Body>Such anecdotes offer early evidence of the intensity that would become Stallman's chief trademark throughout life. When other kids came to the table, Stallman stayed in his room and read. When other kids played Johnny Unitas, Stallman played Werner von Braun. "I was weird," Stallman says, summing up his early years succinctly in a 1999 interview. "After a certain age, the only friends I had were teachers." With no dorm and no dancing, Stallman's social universe imploded. Like an astronaut experiencing the aftereffects of zero-gravity, Stallman found that his ability to interact with nonhackers, especially female nonhackers, had atrophied significantly. After 16 weeks in the AI Lab, the self confidence he'd been quietly accumulating during his 4 years at Harvard was virtually gone.</Body>
              </Article>
              <Article $pb={18}>
                <Heading>Outside the classroom, Stallman</Heading>
                <Body>Stallman finally took a moment to participate in the preclass bull session. Frustrated, Steele took it upon himself to the solve the problem. He gathered together the four different macro packages and began assembling a chart documenting the most useful macro commands. In</Body>
              </Article>
            </ArticleList>
          </Page>
          <Scrollbar>
            <ScrollCap><ScrollArrow /></ScrollCap>
            <ScrollThumb><ThumbGrip /><ThumbGrip /><ThumbGrip /><ThumbGrip /></ScrollThumb>
            <ScrollTrack />
            <ScrollCap><ScrollArrow $down /></ScrollCap>
          </Scrollbar>
        </PageArea>
      </Browser>

      <Taskbar>
        <StartSlot><WindowsOrb /></StartSlot>
        <TaskSlot><IeIcon /></TaskSlot>
        <TaskSlot><CalcIcon /></TaskSlot>
        <TaskSlot><KeyboardIcon /></TaskSlot>
        <TaskSlot $state="open"><FolderIcon /></TaskSlot>
        <TaskSlot><MediaIcon /></TaskSlot>
        <TaskSlot><MonitorIcon /></TaskSlot>
        <TaskSlot><NavigatorIcon /></TaskSlot>
        <TaskSlot><BraveBack><SiBrave size={30} color="#f2551e" /></BraveBack></TaskSlot>
        <TaskSlot><CertIcon /></TaskSlot>
        <TaskSlot><ChromeIcon /></TaskSlot>
        <TaskSlot><ZillaIcon /></TaskSlot>
        <TaskSlot><BlenderIcon /></TaskSlot>
        <TaskSlot><VlcIcon /></TaskSlot>
        <TaskSlot><PyDocIcon /></TaskSlot>
        <TaskSlot><ClapIcon /></TaskSlot>
        <TaskSlot $state="hot"><OperaIcon id="opTask" w={28} h={32} /></TaskSlot>
        <TaskSlot $state="dark"><SublimeTile><SiSublimetext size={18} color="#f49a0e" /></SublimeTile></TaskSlot>
        <Tray>
          <TrayItem $w={26}>FR</TrayItem>
          <TrayItem $w={28}><ScrollArrow $c="#fff" /></TrayItem>
          <TrayItem $w={20}><FlagIcon /></TrayItem>
          <TrayItem $w={32}><SpeakerIcon /></TrayItem>
          <ClockBox>13:55<br />23/03/2019</ClockBox>
          <ShowDesktop />
        </Tray>
      </Taskbar>
    </Screen>
  );
}
